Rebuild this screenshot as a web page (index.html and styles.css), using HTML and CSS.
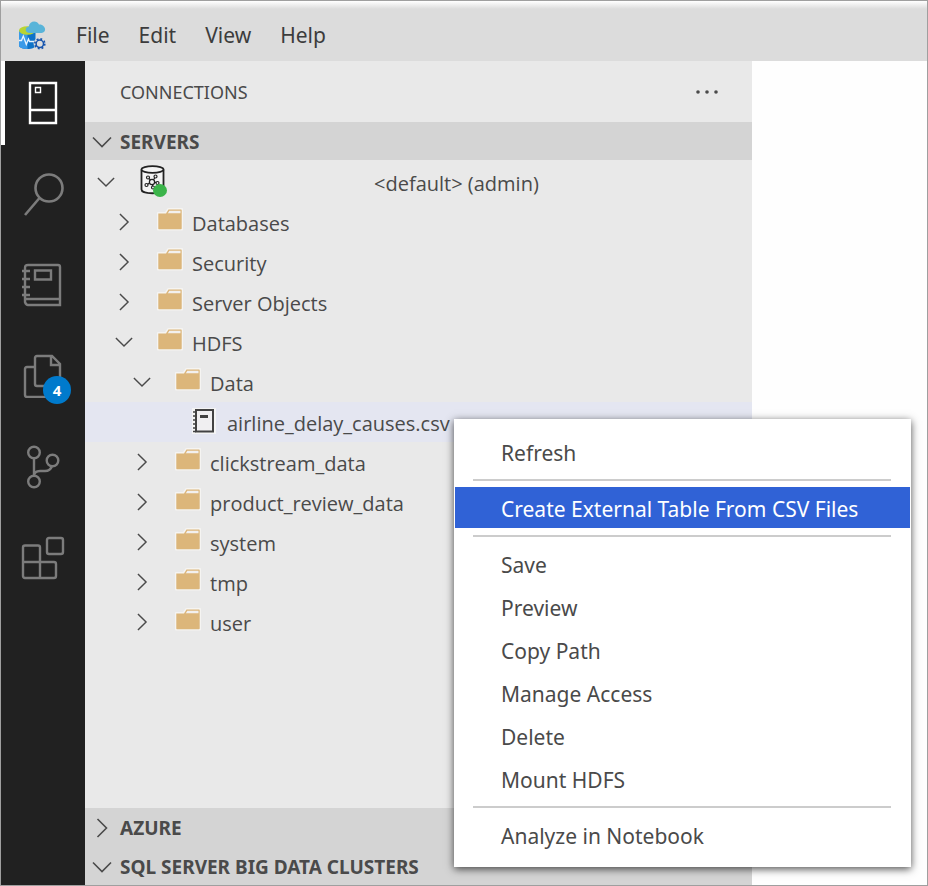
FILE: index.html
```html
<!DOCTYPE html>
<html lang="en">
<head>
<meta charset="utf-8">
<title>Connections</title>
<link rel="stylesheet" href="styles.css">
</head>
<body>
<svg class="defs" aria-hidden="true">
  <symbol id="down" viewBox="0 0 20 20"><path d="M1 5.500l9 9 9-9" fill="none" stroke="currentColor" stroke-width="1.600"/></symbol>
  <symbol id="right" viewBox="0 0 20 20"><path d="M5.500 1l9 9-9 9" fill="none" stroke="currentColor" stroke-width="1.600"/></symbol>
  <symbol id="folder" viewBox="0 0 26 26">
    <path d="M0 5q0-1 1-1h7l2.500-3.500q.5-.5 1-.5H25q1 0 1 1v20.500q0 1-1 1H1q-1 0-1-1z" fill="#f5f4f2"/>
    <path d="M1.300 5.500H9L11.500 1.500H24q.7 0 .7.700V20.500q0 .8-.8.800H2q-.7 0-.7-.8z" fill="#dcb67a"/>
    <path d="M12.300 2.800h11.200v2.400H10.800z" fill="#f2f0ee"/>
  </symbol>
</svg>
<div class="window">
  <header class="menubar">
    <svg class="logo" viewBox="0 0 28 30" aria-hidden="true">
      <path d="M1 10v15.500c0 2.300 4 3.500 8.500 3.500s8-1.200 8-3.500V10z" fill="#0f73c8"/>
      <path d="M1 10v15.500c0 2.300 4 3.500 8.500 3.500V10z" fill="#3a9ae8"/>
      <ellipse cx="9.300" cy="10.500" rx="8.300" ry="4.200" fill="#b9d432"/>
      <path d="M1 20.500h2.500l1.800-4.500 3 8.500 2.200-5.500 1 2.500H17" fill="none" stroke="#e8f4ff" stroke-width="1.300"/>
      <path d="M12 13c-5.500 0-5.500-6-1.200-6.500C11.500 .5 19 0 21 4.500c6.500-.5 8.500 8 2.500 8.500z" fill="#59b4d9"/>
      <circle cx="21.800" cy="23.800" r="6.200" fill="#dcdcdc"/>
      <circle cx="21.800" cy="23.800" r="3.700" fill="none" stroke="#1553ad" stroke-width="1.500"/>
      <circle cx="21.800" cy="23.800" r="5" fill="none" stroke="#1553ad" stroke-width="1.600" stroke-dasharray="1.900 2.027"/>
    </svg>
    <nav class="menus">
      <button>File</button><button>Edit</button><button>View</button><button>Help</button>
    </nav>
  </header>
  <div class="workbench">
    <nav class="activity">
      <button class="active" aria-label="Connections"><svg viewBox="0 0 44 44" fill="none" stroke="currentColor"><path d="M9 2h26v40H9zM9 29h26" stroke-width="2.400"/><path d="M14.500 6.500h5v5h-5z" stroke-width="1.400"/></svg></button>
      <button aria-label="Search"><svg viewBox="0 0 44 44" fill="none" stroke="currentColor" stroke-width="2.600"><circle cx="28" cy="16" r="13.500"/><path d="M18.500 26L4 43"/></svg></button>
      <button aria-label="Notebooks"><svg viewBox="0 0 44 44" fill="none" stroke="currentColor" stroke-width="2.400"><path d="M7 2h30q2 0 2 2v38H7q-2 0-3-3V5q0-3 3-3z"/><path d="M5 36h34M14 7.500h16v9H14zM1 8h8M1 16h8M1 24h8M1 32h8"/></svg></button>
      <button aria-label="Explorer, 4 unsaved"><svg viewBox="0 0 44 44" fill="none" stroke="currentColor" stroke-width="2.400"><path d="M14 13H6q-2 0-2 2v26q0 2 2 2h24M14 4q0-2 2-2h15l8 8v22H16q-2 0-2-2zM30 2v9h9"/></svg><span class="badge">4</span></button>
      <button aria-label="Source control"><svg viewBox="0 0 44 44" fill="none" stroke="currentColor" stroke-width="2.400"><circle cx="13" cy="7.500" r="5.800"/><circle cx="13" cy="36.500" r="5.800"/><circle cx="31.500" cy="15.500" r="5.800"/><path d="M13 13v18c0-3 2-5 6-5h5c4 0 6-2 7-5"/></svg></button>
      <button aria-label="Extensions"><svg viewBox="0 0 44 44" fill="none" stroke="currentColor" stroke-width="2.400"><path d="M4 9.500h13q2 0 2 2V26h14q2 0 2 2v12q0 2-2 2H4q-2 0-2-2V11.500q0-2 2-2zM2 26h17v16M28 2h12q2 0 2 2v12q0 2-2 2H28q-2 0-2-2V4q0-2 2-2z"/></svg></button>
    </nav>
    <aside class="panel">
      <div class="panel-head"><h1>CONNECTIONS</h1><button class="more" aria-label="More actions"><svg viewBox="0 0 24 6" fill="currentColor"><circle cx="3" cy="3" r="1.800"/><circle cx="12" cy="3" r="1.800"/><circle cx="21" cy="3" r="1.800"/></svg></button></div>
      <button class="section"><svg><use href="#down"/></svg>SERVERS</button>
      <div class="tree" role="tree">
        <button class="row l1" role="treeitem"><svg class="chev"><use href="#down"/></svg>
          <svg class="icon server" viewBox="0 0 28 32"><path d="M2.500 4.500v20c0 5 22 5 22 0v-20" fill="#f4f4f4" stroke="#222" stroke-width="1.800"/><ellipse cx="13.500" cy="4.500" rx="11" ry="3.300" fill="#f4f4f4" stroke="#222" stroke-width="1.700"/><g fill="none" stroke="#222" stroke-width="1.200"><circle cx="13" cy="17" r="2.600"/><circle cx="9" cy="12.500" r="1.500"/><circle cx="16.500" cy="11.500" r="1.500"/><circle cx="7.500" cy="20" r="1.500"/><circle cx="18.500" cy="18" r="1.500"/><circle cx="14" cy="22.500" r="1.500"/><path d="M10 13.500l1.500 1.500M14.300 15l1.500-2.200M10.500 18l-1.800 1.200M15.500 17.300h1.700M13.300 19.500l.5 1.700"/></g><ellipse cx="21" cy="25.500" rx="7" ry="6.500" fill="#3bb44a"/></svg>
          <span class="account">&lt;default&gt; (admin)</span></button>
        <button class="row l2" role="treeitem"><svg class="chev"><use href="#right"/></svg><svg class="icon"><use href="#folder"/></svg><span>Databases</span></button>
        <button class="row l2" role="treeitem"><svg class="chev"><use href="#right"/></svg><svg class="icon"><use href="#folder"/></svg><span>Security</span></button>
        <button class="row l2" role="treeitem"><svg class="chev"><use href="#right"/></svg><svg class="icon"><use href="#folder"/></svg><span>Server Objects</span></button>
        <button class="row l2" role="treeitem"><svg class="chev"><use href="#down"/></svg><svg class="icon"><use href="#folder"/></svg><span>HDFS</span></button>
        <button class="row l3" role="treeitem"><svg class="chev"><use href="#down"/></svg><svg class="icon"><use href="#folder"/></svg><span>Data</span></button>
        <button class="row l4 selected" role="treeitem"><svg class="chev"></svg><svg class="icon" viewBox="0 0 26 26"><path d="M0 0h24v26H0z" fill="#f4f4f4"/><path d="M4 2h17v21.500H4z" fill="#f0eff1" stroke="#424242" stroke-width="2"/><path d="M8 7h8v3H8z" fill="#424242"/><path d="M1 4h3M1 8h3M1 12h3M1 16h3M1 20h3M1 23.500h3" stroke="#424242" stroke-width="1.500"/></svg><span>airline_delay_causes.csv</span></button>
        <button class="row l3" role="treeitem"><svg class="chev"><use href="#right"/></svg><svg class="icon"><use href="#folder"/></svg><span>clickstream_data</span></button>
        <button class="row l3" role="treeitem"><svg class="chev"><use href="#right"/></svg><svg class="icon"><use href="#folder"/></svg><span>product_review_data</span></button>
        <button class="row l3" role="treeitem"><svg class="chev"><use href="#right"/></svg><svg class="icon"><use href="#folder"/></svg><span>system</span></button>
        <button class="row l3" role="treeitem"><svg class="chev"><use href="#right"/></svg><svg class="icon"><use href="#folder"/></svg><span>tmp</span></button>
        <button class="row l3" role="treeitem"><svg class="chev"><use href="#right"/></svg><svg class="icon"><use href="#folder"/></svg><span>user</span></button>
      </div>
      <div class="collapsed">
        <button class="section"><svg><use href="#right"/></svg>AZURE</button>
        <button class="section"><svg><use href="#down"/></svg>SQL SERVER BIG DATA CLUSTERS</button>
      </div>
    </aside>
    <main class="editor"></main>
  </div>
  <div class="context" role="menu">
    <button role="menuitem">Refresh</button>
    <hr>
    <button role="menuitem" class="hot">Create External Table From CSV Files</button>
    <hr>
    <button role="menuitem">Save</button>
    <button role="menuitem">Preview</button>
    <button role="menuitem">Copy Path</button>
    <button role="menuitem">Manage Access</button>
    <button role="menuitem">Delete</button>
    <button role="menuitem">Mount HDFS</button>
    <hr>
    <button role="menuitem">Analyze in Notebook</button>
  </div>
</div>
</body>
</html>
```
FILE: styles.css
```css
* { box-sizing: border-box; }
body {
  margin: 0;
  font-family: "Noto Sans", "Open Sans", sans-serif;
  color: #4a4a4a;
}
button {
  margin: 0;
  padding: 0;
  border: 0;
  background: none;
  font: inherit;
  color: inherit;
  text-align: left;
  white-space: nowrap;
}
svg { display: block; flex: none; }
.defs { position: absolute; width: 0; height: 0; }

.window {
  position: relative;
  display: flex;
  flex-direction: column;
  min-height: 100vh;
  border: 1px solid #9f9f9f;
}
.menubar {
  display: flex;
  align-items: center;
  height: 60px;
  padding: 8px 17px 0;
  background: linear-gradient(#fff, #dcdcdc 8px);
}
.logo { width: 28px; height: 30px; }
.menus {
  display: flex;
  gap: 29px;
  margin-left: 30px;
  font-size: 21px;
  color: #3c3c3c;
}
.workbench {
  flex: 1;
  display: grid;
  grid-template-columns: 84px minmax(0, 667fr) minmax(0, 175fr);
}

.activity {
  display: flex;
  flex-direction: column;
  gap: 7px;
  background: #212121;
}
.activity button {
  position: relative;
  display: flex;
  align-items: center;
  justify-content: center;
  height: 84px;
  color: #7c7c7c;
}
.activity svg { width: 44px; height: 44px; }
.activity .active { color: #fff; box-shadow: inset 4px 0 #fff; }
.badge {
  position: absolute;
  right: 14px;
  bottom: 14px;
  width: 28px;
  height: 28px;
  border-radius: 50%;
  background: #007acc;
  color: #fff;
  font-size: 15px;
  font-weight: 700;
  line-height: 28px;
  text-align: center;
}

.panel {
  display: flex;
  flex-direction: column;
  background: #e9e9e9;
}
.panel-head {
  display: flex;
  align-items: center;
  justify-content: space-between;
  height: 61px;
  padding: 0 33px 0 35px;
}
.panel-head h1 { margin: 0; font-size: 18px; font-weight: 400; }
.more svg { width: 24px; height: 6px; }
.section {
  display: flex;
  align-items: center;
  gap: 8px;
  height: 38px;
  padding: 2px 7px 0;
  background: #d4d4d4;
  font-size: 19px;
  font-weight: 700;
}
.section svg { width: 20px; height: 20px; }
.collapsed {
  display: flex;
  flex-direction: column;
  gap: 1px;
  background: #d4d4d4;
}
.tree {
  flex: 1;
  display: flex;
  flex-direction: column;
  padding: 2px 0;
  font-family: "Open Sans", "Noto Sans", sans-serif;
  font-size: 20px;
}
.row {
  display: flex;
  align-items: center;
  height: 40px;
}
.row span { margin-left: 9px; padding-top: 2px; }
.l1 { padding-left: 12px; }
.l2 { padding-left: 30px; }
.l3 { padding-left: 48px; }
.l4 { padding-left: 65px; }
.selected { background: #e4e6f1; }
.chev { width: 18px; height: 18px; margin-right: 24px; }
.icon { width: 26px; height: 26px; margin-bottom: 2px; }
.server { width: 28px; height: 32px; }
.row .account { margin-left: 207px; }
.editor { background: #fefefe; }

.context {
  position: absolute;
  left: 453px;
  top: 418px;
  display: flex;
  flex-direction: column;
  gap: 2px;
  min-width: 457px;
  padding: 12px 1px;
  background: #fff;
  box-shadow: 0 2px 8px rgba(0, 0, 0, 0.7);
  font-size: 21px;
}
.context button { height: 41px; padding: 2px 46px 0; }
.context .hot { background: #3062d6; color: #fff; }
.context hr {
  align-self: stretch;
  height: 2px;
  margin: 5px 19px 4px 18px;
  border: 0;
  background: #cccccc;
}
```
